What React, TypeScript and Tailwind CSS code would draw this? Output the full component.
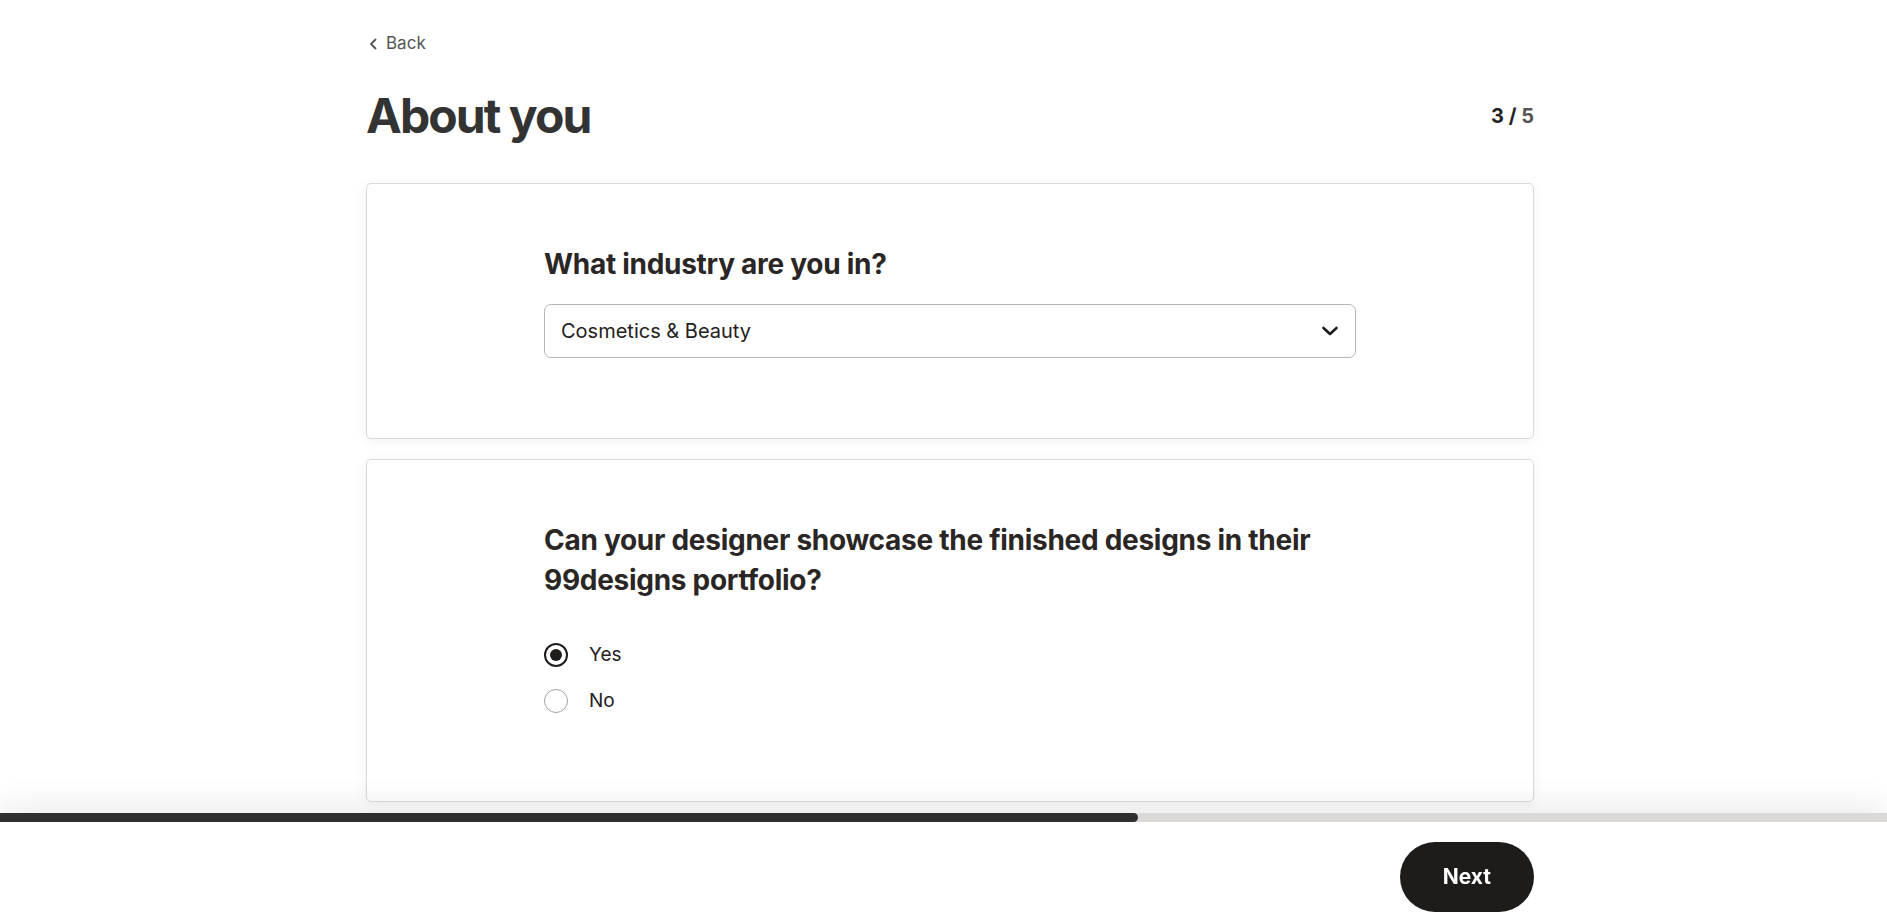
import React, { useState } from 'react';

const INDUSTRIES = [
  'Cosmetics & Beauty',
  'Fashion & Apparel',
  'Food & Drink',
  'Health & Wellness',
  'Technology',
];

const ChevronLeft = () => (
  <svg width="9" height="12" viewBox="0 0 9 12" fill="none" stroke="currentColor" strokeWidth="1.8" strokeLinecap="round" strokeLinejoin="round">
    <polyline points="6.5,1.5 2,6 6.5,10.5" />
  </svg>
);

const ChevronDown = () => (
  <svg width="18" height="11" viewBox="0 0 18 11" fill="none" stroke="currentColor" strokeWidth="2.6" strokeLinecap="round" strokeLinejoin="round">
    <polyline points="2.5,2.5 9,8.5 15.5,2.5" />
  </svg>
);

const Radio: React.FC<{ label: string; checked: boolean; onSelect: () => void }> = ({ label, checked, onSelect }) => (
  <label onClick={onSelect} className="flex items-center h-[46px] cursor-pointer">
    <span
      className={`flex items-center justify-center w-6 h-6 rounded-full bg-white ${
        checked ? 'border-2 border-[#1f1d1c]' : 'border border-[#a3a3a3]'
      }`}
    >
      {checked && <span className="w-3 h-3 rounded-full bg-[#1f1d1c]" />}
    </span>
    <span className="ml-[21px] text-[19px] text-[#232120]">{label}</span>
  </label>
);

const App: React.FC = () => {
  const [industry, setIndustry] = useState(INDUSTRIES[0]);
  const [showcase, setShowcase] = useState<'yes' | 'no'>('yes');
  const step = 3;
  const total = 5;

  return (
    <div className="min-h-screen bg-white text-[#2a2827] pl-[13px] pb-[140px]" style={{ fontFamily: 'Inter, "Noto Sans", sans-serif' }}>
      <div className="w-[1168px] mx-auto pt-[30px]">
        <a href="#" className="flex items-center h-[28px] text-[17px] text-[#555555] no-underline">
          <span className="ml-[3px] mr-[8px] flex items-center">
            <ChevronLeft />
          </span>
          Back
        </a>

        <div className="flex items-center justify-between mt-[28px]">
          <h1 className="text-[48px] leading-[60px] font-bold tracking-[-0.04em] text-[#333333]">About you</h1>
          <div className="text-[20px] font-bold">
            <span className="text-[#222222]">3 /</span> <span className="text-[#555555]">5</span>
          </div>
        </div>

        <section className="mt-[37px] bg-white border border-[#d9d9d9] rounded-[5px] shadow-[0_2px_14px_rgba(0,0,0,0.06)] pt-[60px] pb-[80px]">
          <div className="w-[812px] mx-auto">
            <h2 className="text-[28px] leading-[40px] font-bold tracking-[-0.01em] text-[#2a2625]">What industry are you in?</h2>
            <div className="relative mt-[20px]">
              <select
                value={industry}
                onChange={(e) => setIndustry(e.target.value)}
                className="appearance-none w-full h-[54px] border border-[#b5b5b5] rounded-[7px] bg-white pl-[16px] pr-[48px] text-[20px] text-[#232120] outline-none"
                style={{ fontFamily: 'Inter, "Noto Sans", sans-serif' }}
              >
                {INDUSTRIES.map((i) => (
                  <option key={i} value={i}>
                    {i}
                  </option>
                ))}
              </select>
              <span className="pointer-events-none absolute right-[17px] top-1/2 -translate-y-1/2 text-[#1f1d1c]">
                <ChevronDown />
              </span>
            </div>
          </div>
        </section>

        <section className="mt-[20px] bg-white border border-[#d9d9d9] rounded-[5px] shadow-[0_2px_14px_rgba(0,0,0,0.06)] pt-[60px] pb-[77px]">
          <div className="w-[812px] mx-auto">
            <h2 className="text-[28px] leading-[40px] font-bold tracking-[-0.01em] text-[#2a2625]">
              Can your designer showcase the finished designs in their 99designs portfolio?
            </h2>
            <div className="mt-[32px] flex flex-col">
              <Radio label="Yes" checked={showcase === 'yes'} onSelect={() => setShowcase('yes')} />
              <Radio label="No" checked={showcase === 'no'} onSelect={() => setShowcase('no')} />
            </div>
          </div>
        </section>
      </div>

      <footer className="fixed bottom-0 left-0 right-0 bg-white shadow-[0_-10px_28px_rgba(0,0,0,0.07)]">
        <div className="h-[9px] bg-[#dad9d7]">
          <div className="h-full bg-[#2f2f2f] rounded-r-full" style={{ width: `${(step / total) * 100 + 0.3}%` }} />
        </div>
        <div className="pl-[13px]">
          <div className="w-[1168px] mx-auto flex justify-end pt-[20px] pb-[12px]">
            <button className="h-[70px] px-[43px] rounded-full bg-[#1e1c1b] text-white text-[21px] font-bold">Next</button>
          </div>
        </div>
      </footer>
    </div>
  );
};

export default App;
